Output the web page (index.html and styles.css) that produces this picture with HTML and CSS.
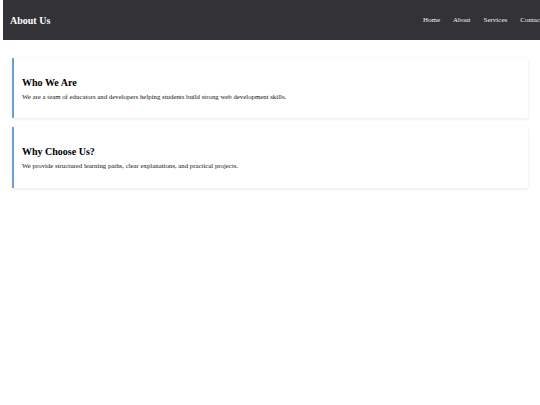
FILE: index.html
```html
<!DOCTYPE html>
<html lang="en">

<head>
    <meta charset="UTF-8">
    <meta name="viewport" content="width=device-width, initial-scale=1.0">
    <title>About Us</title>
    <link rel="stylesheet" href="styles.css">
</head>

<body>
    <header class="site-header">
        <h1>About Us</h1>
        <nav class="site-nav">
            <a href="#">Home</a>
            <a href="#">About</a>
            <a href="#">Services</a>
            <a href="#">Contact</a>
        </nav>
    </header>

    <main class="content">
        <section class="card">
            <h2>Who We Are</h2>
            <p>We are a team of educators and developers helping students build strong web development skills.</p>
        </section>
        <section class="card">
            <h2>Why Choose Us?</h2>
            <p>We provide structured learning paths, clear explanations, and practical projects.</p>
        </section>
    </main>
</body>

</html>
```

FILE: styles.css
```css
html {
    overflow: hidden;
}

body {
    margin: 0;
    font-family: "Liberation Serif", "Times New Roman", serif;
    background: #fff;
    color: #111;
}

.site-header {
    display: flex;
    justify-content: space-between;
    align-items: center;
    width: 100%;
    height: 40px;
    margin-left: 3px;
    padding: 0 7px;
    background: #333236;
    color: #fff;
}

.site-header h1 {
    margin: 0;
    font-size: 10px;
}

.site-nav {
    display: flex;
    gap: 13px;
    padding-right: 8px;
}

.site-nav a {
    color: #f2f2f2;
    text-decoration: none;
    font-size: 7px;
}

.content {
    padding: 18px 12px 0;
}

.card {
    background: #fff;
    border-left: 2px solid #6f9fd3;
    box-shadow: 0 1px 3px rgba(0, 0, 0, 0.1);
    padding: 8px 8px;
    margin-bottom: 9px;
}

.card h2 {
    margin: 11px 0 5px;
    font-size: 10px;
    line-height: 11px;
    color: #000;
}

.card p {
    margin: 0 0 10px;
    font-size: 6.8px;
    line-height: 7.4px;
}
```
